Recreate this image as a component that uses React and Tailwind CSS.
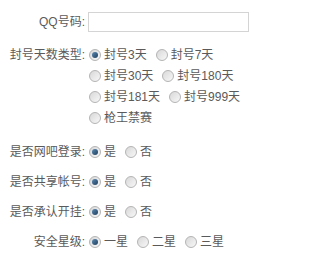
import React from 'react';

const font = { fontFamily: '"Liberation Sans", "Noto Sans CJK SC", sans-serif' };

function Radio({ checked, label }) {
  return (
    <label className="flex items-center mr-[9px]">
      <span className="relative w-[12px] h-[12px] rounded-full border border-[#b4b4b4] bg-gradient-to-br from-[#d8d8d8] to-[#f8f8f8] mr-[3px] flex items-center justify-center">
        {checked && (
          <span className="w-[6px] h-[6px] rounded-full bg-gradient-to-br from-[#5d8bb3] to-[#1e3f5e]" />
        )}
      </span>
      <span>{label}</span>
    </label>
  );
}

function Label({ children }) {
  return <div className="w-[85px] shrink-0 text-right">{children}</div>;
}

function RadioField({ label, options, checked = 0 }) {
  return (
    <div className="flex items-center h-[30px]">
      <Label>{label}</Label>
      <div className="flex items-center pl-[4px]">
        {options.map((o, i) => (
          <Radio key={o} label={o} checked={i === checked} />
        ))}
      </div>
    </div>
  );
}

export default function App() {
  const banRows = [
    ['封号3天', '封号7天'],
    ['封号30天', '封号180天'],
    ['封号181天', '封号999天'],
    ['枪王禁赛'],
  ];

  return (
    <div className="w-[315px] h-[266px] bg-white pt-[12px] text-[12px] text-[#5a5a5a]" style={font}>
      <div className="flex items-center h-[20px]">
        <Label>QQ号码:</Label>
        <input className="ml-[3px] w-[161px] h-[20px] border border-[#d4d4d4] outline-none" />
      </div>

      <div className="flex mt-[12px]">
        <div className="h-[21px] flex items-center">
          <Label>封号天数类型:</Label>
        </div>
        <div className="flex flex-col pl-[4px]">
          {banRows.map((row, r) => (
            <div key={r} className="flex items-center h-[21px]">
              {row.map((o, i) => (
                <Radio key={o} label={o} checked={r === 0 && i === 0} />
              ))}
            </div>
          ))}
        </div>
      </div>

      <div className="mt-[9px]">
        <RadioField label="是否网吧登录:" options={['是', '否']} />
        <RadioField label="是否共享帐号:" options={['是', '否']} />
        <RadioField label="是否承认开挂:" options={['是', '否']} />
        <RadioField label="安全星级:" options={['一星', '二星', '三星']} />
      </div>
    </div>
  );
}
